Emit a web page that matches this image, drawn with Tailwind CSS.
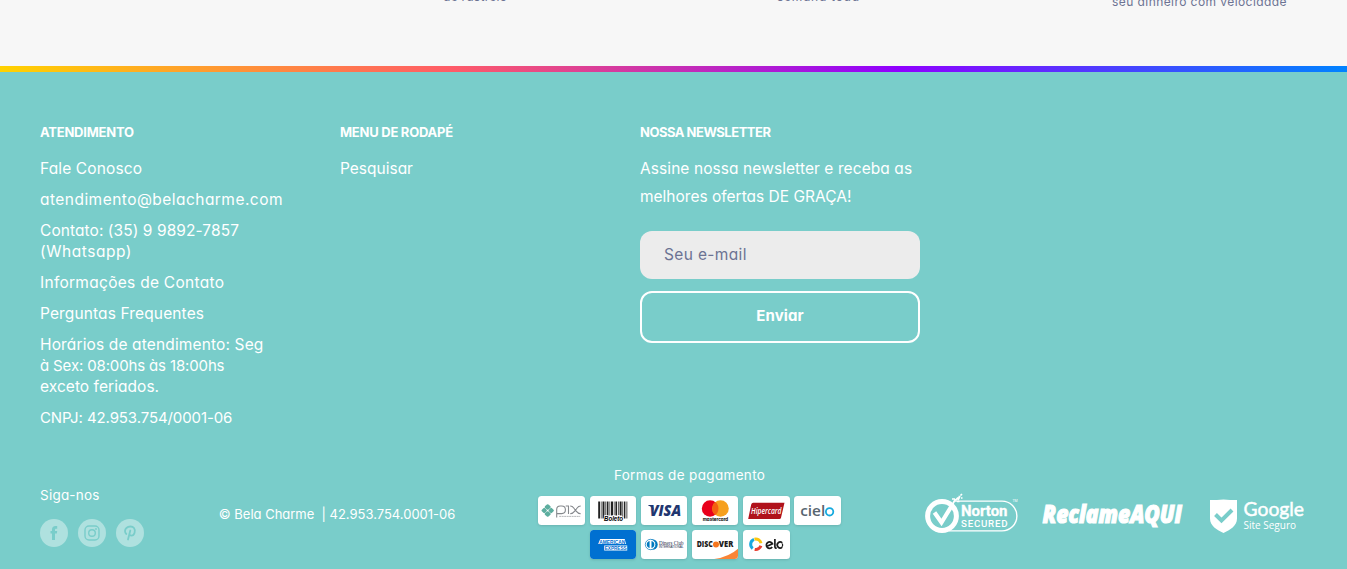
<!DOCTYPE html>
<html lang="pt-BR">
<head>
<meta charset="utf-8">
<title>Bela Charme</title>
<script src="https://cdn.jsdelivr.net/npm/@tailwindcss/browser@4"></script>
</head>
<body class="h-[569px] overflow-hidden bg-[#79cdca] font-['Inter',sans-serif] text-white [font-feature-settings:'cv11']">

<section class="flex h-[66px] items-start overflow-hidden bg-[#f7f7f7] pl-[443px] text-xs leading-[18px] whitespace-nowrap text-[#6c7393]">
  <p class="-mt-3 w-[334px] tracking-[0.29px]">de rastreio</p>
  <p class="-mt-3 w-[335px] tracking-[0.73px]">semana toda</p>
  <p class="-mt-[7px] tracking-[0.43px]">seu dinheiro com velocidade</p>
</section>
<div class="h-[6px] bg-[linear-gradient(90deg,#ffd200,#ff5c67_33.33%,#8f00ff_66.67%,#0083ff)]"></div>

<footer class="px-10 pt-[50px]">
  <div class="flex h-[336px] gap-5">
    <div class="w-[280px]">
      <h2 class="text-[13px] leading-5 font-bold tracking-[-0.23px]">ATENDIMENTO</h2>
      <ul class="mt-4 flex flex-col gap-2.5 text-[15.5px] leading-[21px] whitespace-nowrap">
        <li class="tracking-[0.13px]">Fale Conosco</li>
        <li class="tracking-[0.46px]">atendimento@belacharme.com</li>
        <li><span class="block tracking-[0.07px]">Contato: (35) 9 9892-7857</span><span class="block tracking-[0.54px]">(Whatsapp)</span></li>
        <li class="tracking-[0.28px]">Informações de Contato</li>
        <li class="tracking-[0.13px]">Perguntas Frequentes</li>
        <li><span class="block tracking-[0.14px]">Horários de atendimento: Seg</span><span class="block text-[15px] leading-[21px] tracking-[-0.14px]">à Sex: 08:00hs às 18:00hs</span><span class="block tracking-[0.05px]">exceto feriados.</span></li>
        <li class="text-[15px] leading-[21px] tracking-[-0.1px]">CNPJ: 42.953.754/0001-06</li>
      </ul>
    </div>
    <div class="w-[280px]">
      <h2 class="text-[13px] leading-5 font-bold tracking-[-0.25px]">MENU DE RODAPÉ</h2>
      <p class="mt-4 text-[15.5px] leading-[21px]">Pesquisar</p>
    </div>
    <div class="w-[280px]">
      <h2 class="text-[13px] leading-5 font-bold tracking-[-0.49px]">NOSSA NEWSLETTER</h2>
      <p class="mt-[13px] text-[15.5px] leading-7 whitespace-nowrap"><span class="block tracking-[0.08px]">Assine nossa newsletter e receba as</span><span class="block">melhores ofertas DE GRAÇA!</span></p>
      <input type="email" placeholder="Seu e-mail" class="mt-5 block h-12 w-full rounded-xl bg-[#ececec] px-6 pb-0.5 text-[15.5px] tracking-[0.36px] placeholder:text-[#6c7393]">
      <button class="mt-3 block h-[52px] w-full rounded-xl border-2 border-white pb-0.5 text-[15px] leading-5 font-bold tracking-[0.13px]">Enviar</button>
    </div>
  </div>

  <div class="flex items-start whitespace-nowrap">
    <div class="mt-[27px] w-[179.5px]">
      <p class="text-[13.5px] leading-5 tracking-[0.3px]">Siga-nos</p>
      <div class="mt-[14px] flex gap-2.5 text-[#79cdca]">
        <a class="grid size-7 place-items-center rounded-full bg-[#afe1df]"><svg class="size-4" viewBox="0 0 16 16"><path fill="currentColor" d="M6 15V8.600H4.500V6H6V4.400C6 2.300 7.300 1 9.500 1h1.700v2.700h-1.100c-.8 0-1.100.4-1.100 1.100V6h2.200l-.3 2.600H9V15z"/></svg></a>
        <a class="grid size-7 place-items-center rounded-full bg-[#afe1df]"><svg class="size-4" viewBox="0 0 16 16" fill="none" stroke="currentColor" stroke-width="1.400"><rect x="1" y="1" width="14" height="14" rx="4"/><circle cx="8" cy="8" r="3.300"/><circle cx="12" cy="4" r=".9" fill="currentColor" stroke="none"/></svg></a>
        <a class="grid size-7 place-items-center rounded-full bg-[#afe1df]"><svg class="size-4" viewBox="0 0 16 16" fill="none" stroke="currentColor" stroke-width="1.800" stroke-linecap="round"><path d="M8.300 5.500 6 14.500M4.300 9C2.600 7.600 2.500 4.700 4.400 3 6.500 1 10.500 1 12 3c1.800 2.400.6 7.500-2.600 7.600-1 0-1.800-.5-2.100-1.200"/></svg></a>
      </div>
    </div>

    <p class="mt-[46px] w-[318.5px] text-[13px] leading-5 tracking-[-0.01px] whitespace-pre">© Bela Charme  | 42.953.754.0001-06</p>

    <div class="mt-[7px] w-[308px]">
      <p class="text-center text-[13.5px] leading-5 tracking-[0.34px]">Formas de pagamento</p>
      <div class="mt-[11px] flex flex-wrap justify-center gap-[4.800px] [&>svg]:h-[29px] [&>svg]:w-[46.400px] [&>svg]:rounded-[3.500px] [&>svg]:bg-white [&>svg]:shadow-sm">
        <svg viewBox="0 0 46 29">
          <path d="M9.500 9.500 11.300 11 9.500 12.500 7.700 11zM9.500 16.500 11.300 18 9.500 19.500 7.700 18zM6 13 7.500 14.500 6 16 4.500 14.500zM13 13 14.500 14.500 13 16 11.500 14.500z" fill="#5dae9f" stroke="#5dae9f" stroke-width="2.300" stroke-linejoin="round"/>
          <g fill="none" stroke="#85888c" stroke-width="1.100"><path d="M18.500 21.500V13.500Q18.500 10 22 10h1.500q3.700 0 3.700 3.800T23.500 17.600H19M27.500 10h2.800v8M32 10c3 0 3 1.500 5 3.900s2.500 3.900 5.500 3.900M32 17.800c3 0 3.500-1.500 5.500-3.900S39.500 10 42.500 10"/><path d="M21 20.400h21" stroke-width=".6" stroke-dasharray="2 .5"/></g>
        </svg>
        <svg viewBox="0 0 46 29">
          <path fill="#222" d="M8 5.500h1.800v17H8zM10.600 5.500h.7v17h-.7zM12.300 5.500h2v17h-2zM15.200 5.500h.7v14h-.7zM16.600 5.500h1.700v14h-1.700zM19.300 5.500h.7v14h-.7zM20.800 5.500h2v14h-2zM23.600 5.500h.7v14h-.7zM25.200 5.500h1.600v14h-1.600zM27.700 5.500h.8v14h-.8zM29.400 5.500h2v14h-2zM32.200 5.500h.7v17h-.7zM33.700 5.500h1.500v17h-1.500zM36.300 5.500h.8v17h-.8z"/>
          <text x="23.300" y="24.500" text-anchor="middle" textLength="19" lengthAdjust="spacingAndGlyphs" class="fill-black font-['Liberation_Sans'] text-[6.500px] font-bold italic" stroke="#fff" stroke-width="1.500" paint-order="stroke">Boleto</text>
        </svg>
        <svg viewBox="0 0 46 29">
          <text x="8.500" y="20" textLength="31.500" lengthAdjust="spacingAndGlyphs" class="fill-[#21366f] font-['Open_Sans'] text-[15px] font-extrabold italic">VISA</text><path d="M7 9h4.500l1.500 6c-1-2.500-3-4.500-6-5.500z" fill="#21366f"/>
        </svg>
        <svg viewBox="0 0 46 29">
          <circle cx="17.900" cy="12.500" r="8.300" fill="#e9001b"/><circle cx="28.300" cy="12.500" r="8.300" fill="#f6a01e"/><path d="M23.100 6a8.300 8.300 0 0 1 0 13 8.300 8.300 0 0 1 0-13z" fill="#f45f10"/>
          <text x="10.500" y="25.300" textLength="25.500" lengthAdjust="spacingAndGlyphs" class="fill-black font-['Inter'] text-[4.600px] font-bold">mastercard</text>
        </svg>
        <svg viewBox="0 0 46 29">
          <path d="M10 6.800h31.300l-3.500 15q-.3 1.200-1.600 1.200H5l3-14.600q.4-1.600 2-1.600z" fill="#b0121b"/>
          <text x="7.800" y="17.600" textLength="30.500" lengthAdjust="spacingAndGlyphs" class="fill-white font-['Open_Sans'] text-[8px] font-semibold italic">Hipercard</text>
        </svg>
        <svg viewBox="0 0 46 29">
          <text x="6" y="20" textLength="25" lengthAdjust="spacingAndGlyphs" class="fill-[#58656f] font-['Open_Sans'] text-[15px] font-semibold">ciel</text><circle cx="35.400" cy="15.800" r="3.700" fill="none" stroke="#16aade" stroke-width="1.800"/>
        </svg>
        <svg viewBox="0 0 46 29">
          <path d="M-1 0h48v29H-1z" fill="#0070d1"/><path d="M10 9h24.500l1.500 5H8zM14 15.500h23v5H14z" fill="#fff"/>
          <g class="fill-[#0070d1] font-['Liberation_Sans'] text-[5.300px] font-bold"><text x="9" y="13.500" textLength="26" lengthAdjust="spacingAndGlyphs">AMERICAN</text><text x="14.500" y="20" textLength="22" lengthAdjust="spacingAndGlyphs">EXPRESS</text></g>
        </svg>
        <svg viewBox="0 0 46 29">
          <circle cx="11.200" cy="14.500" r="5.300" fill="#0079be"/><circle cx="9.300" cy="14.500" r="5.200" fill="#fff" stroke="#0079be" stroke-width=".7"/><path d="M8.400 10.900v7.200a3.700 3.700 0 0 1 0-7.200zM10.300 10.900v7.200a3.700 3.700 0 0 0 0-7.200z" fill="#0079be"/>
          <g class="fill-[#1d2a47]"><text x="17.800" y="14.500" textLength="24.500" lengthAdjust="spacingAndGlyphs" class="font-['Liberation_Serif'] text-[6.300px]">Diners Club</text><text x="17.800" y="17.900" textLength="24.500" lengthAdjust="spacingAndGlyphs" class="font-['Liberation_Sans'] text-[2.600px]">INTERNATIONAL</text></g>
        </svg>
        <svg viewBox="0 0 46 29">
          <path d="M47 17.500V29H22Q38 26.500 47 17.500z" fill="#f98536"/><circle cx="23.800" cy="14.500" r="3" fill="#f5761f"/>
          <g class="fill-[#1c1c1c] font-['Open_Sans'] text-[7.900px] font-extrabold"><text x="4.500" y="17.300" textLength="16.200" lengthAdjust="spacingAndGlyphs">DISC</text><text x="26.600" y="17.300" textLength="14.500" lengthAdjust="spacingAndGlyphs">VER</text></g>
        </svg>
        <svg viewBox="0 0 46 29">
          <g fill="none" stroke-width="3"><path d="M10.800 9.400A5.300 5.300 0 0 0 9.500 18.500" stroke="#19a9e0"/><path d="M11.300 9.200A5.300 5.300 0 0 1 17.800 13.300" stroke="#fbc70e"/><path d="M17.700 15.800A5.300 5.300 0 0 1 11.500 19.400" stroke="#e94032"/></g>
          <g fill="none" stroke="#1c1c1c" stroke-width="1.700"><path d="M23.300 16.500 29.300 13.900A3.200 3.200 0 1 0 29 17M31.700 9v7.500q0 1.700 1.800 1.700M39 12.900a2.900 2.900 0 1 0 0 4.200"/></g><path d="M39 13.500q1 1.500 0 3.200" fill="none" stroke="#1c1c1c" stroke-width="1.200"/>
        </svg>
      </div>
    </div>

    <div class="mt-[36px] ml-[82px] flex items-start">
      <svg class="h-[40px] w-[94px] overflow-visible" viewBox="0 0 94 40">
        <path d="M30 7.100H77a14.900 14.900 0 0 1 0 29.800H24" fill="none" stroke="#fff" stroke-width="1.400"/>
        <circle cx="17" cy="22" r="14.400" fill="none" stroke="#fff" stroke-width="5"/>
        <path d="M9.500 18.500 16.500 28.500 26 13" fill="none" stroke="#fff" stroke-width="4.200"/>
        <path d="M25.500 14 30.500 5M30.500 6.500l2.500-3M33 6l1.500-3M33.500 2.500h2M35.500 1.500l1.500-1.500M27 5h3M32 7.500h2.500M36 4h1.500" stroke="#fff" stroke-width="1.700"/>
        <g class="fill-white font-['Roboto']"><text x="36" y="21.500" textLength="46.500" lengthAdjust="spacingAndGlyphs" class="text-[15px] font-bold" stroke="#fff" stroke-width=".3">Norton</text><text x="36" y="33" textLength="46.500" class="text-[9.700px] font-medium">SECURED</text><text x="87.500" y="8" class="text-[3.500px]">TM</text></g>
      </svg>
      <svg class="ml-[23px] h-[40px] w-[143px]" viewBox="0 0 143 40">
        <text x="0.500" y="28.500" textLength="139.500" lengthAdjust="spacingAndGlyphs" class="fill-white stroke-white font-['Open_Sans'] text-[25px] font-extrabold italic" stroke-width="1.200">ReclameAQUI</text>
      </svg>
      <svg class="ml-[24px] h-[40px] w-[98px]" viewBox="0 0 98 40">
        <path d="M1 6Q8 6 14.500 5.500 21 6 28 6v18.500C28 32 21 36 14.500 39 8 36 1 32 1 24.500z" fill="#fff"/><path d="m6.500 20.500 6 6L23 16" fill="none" stroke="#79cdca" stroke-width="4"/>
        <g class="fill-white"><text x="34.500" y="22" textLength="60.500" lengthAdjust="spacingAndGlyphs" class="font-['Lato'] text-[20px]" stroke="#fff" stroke-width=".5">Google</text><text x="34.500" y="35" textLength="52.500" class="font-['Open_Sans'] text-[10px]">Site Seguro</text></g>
      </svg>
    </div>
  </div>
</footer>
</body>
</html>
